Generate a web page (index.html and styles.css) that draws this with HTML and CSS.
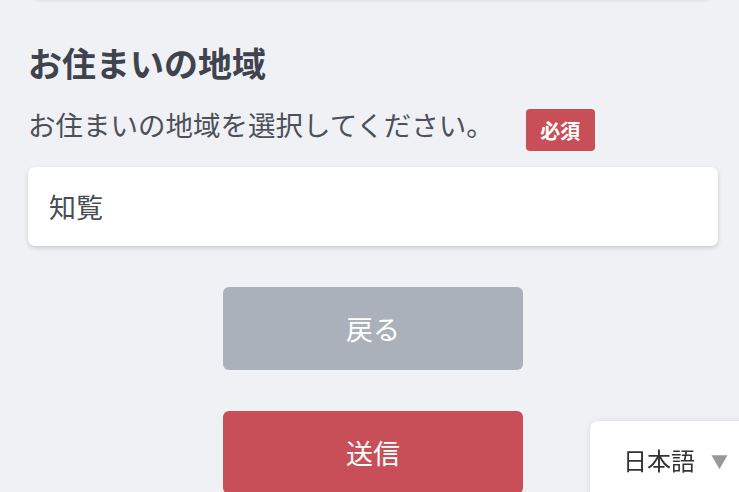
FILE: index.html
```html
<!DOCTYPE html>
<html lang="ja">
<head>
<meta charset="utf-8">
<title>お住まいの地域</title>
<link rel="stylesheet" href="styles.css">
</head>
<body>
<div class="page">
  <div class="top-card"></div>
  <section class="field">
    <h2 class="field-title">お住まいの地域</h2>
    <div class="field-desc">
      <span class="desc-text">お住まいの地域を選択してください。</span>
      <span class="badge">必須</span>
    </div>
    <div class="select-box">知覧</div>
  </section>
  <div class="actions">
    <button class="btn btn-back" type="button">戻る</button>
    <button class="btn btn-submit" type="button">送信</button>
  </div>
</div>
<div class="lang-select">
  <span class="lang-label">日本語</span>
  <span class="lang-arrow">▼</span>
</div>
</body>
</html>
```

FILE: styles.css
```css
html, body {
  margin: 0;
  padding: 0;
}
body {
  background: #f0f1f5;
  font-family: "Noto Sans CJK JP", "Noto Sans", sans-serif;
  color: #4b5059;
  overflow: hidden;
  height: 492px;
}
.page {
  padding: 0 21px 0 28px;
}
.top-card {
  height: 100px;
  margin: -102px 6px 0 4px;
  background: #ffffff;
  border-radius: 8px;
  box-shadow: 0 1px 5px rgba(0, 0, 0, 0.18);
}
.field-title {
  margin: 45px 0 0 0;
  font-size: 34px;
  line-height: 40px;
  font-weight: 700;
  color: #3e434d;
}
.field-desc {
  display: flex;
  align-items: center;
  gap: 32px;
  margin-top: 20px;
}
.desc-text {
  font-size: 27.5px;
  line-height: 40px;
  color: #4b5059;
}
.badge {
  display: inline-flex;
  align-items: center;
  justify-content: center;
  width: 69px;
  height: 42px;
  margin: 6px 0 -6px 0;
  border-radius: 4px;
  background: #c84f58;
  color: #ffffff;
  font-size: 20px;
  font-weight: 700;
}
.select-box {
  margin-top: 22px;
  height: 79px;
  display: flex;
  align-items: center;
  padding-left: 21px;
  background: #ffffff;
  border-radius: 7px;
  box-shadow: 0 2px 4px rgba(0, 0, 0, 0.16);
  font-size: 27px;
  color: #474c55;
}
.actions {
  display: flex;
  flex-direction: column;
  align-items: center;
  gap: 41px;
  margin-top: 41px;
}
.btn {
  width: 300px;
  height: 83px;
  border: none;
  border-radius: 6px;
  color: #ffffff;
  font-family: "Noto Sans CJK JP", "Noto Sans", sans-serif;
  font-size: 27px;
  padding: 0;
}
.btn-back {
  background: #abb1bb;
}
.btn-submit {
  background: #c84f58;
}
.lang-select {
  position: fixed;
  left: 590px;
  top: 421px;
  width: 160px;
  height: 90px;
  background: #ffffff;
  border-radius: 8px 0 0 0;
  box-shadow: 0 0 6px rgba(0, 0, 0, 0.1);
  display: flex;
  align-items: flex-start;
  padding: 20px 0 0 33px;
  box-sizing: border-box;
  gap: 16px;
}
.lang-label {
  font-size: 24px;
  line-height: 38px;
  color: #333333;
}
.lang-arrow {
  font-size: 17px;
  line-height: 40px;
  color: #999999;
}
```
